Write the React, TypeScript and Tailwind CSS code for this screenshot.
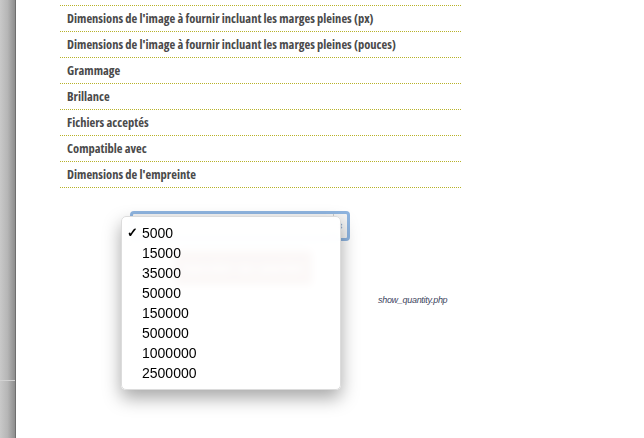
import React from "react";

const rows = [
  "Dimensions de l'image à fournir incluant les marges pleines (mm)",
  "Dimensions de l'image à fournir incluant les marges pleines (px)",
  "Dimensions de l'image à fournir incluant les marges pleines (pouces)",
  "Grammage",
  "Brillance",
  "Fichiers acceptés",
  "Compatible avec",
  "Dimensions de l'empreinte",
];

const quantities = ["5000", "15000", "35000", "50000", "150000", "500000", "1000000", "2500000"];

function SpecRow({ label }: { label: string }) {
  return (
    <div className="relative h-[26px] border-b border-dotted border-[#b8b22a] flex items-center pl-[7px] pt-[2px] overflow-hidden">
      <span className="font-['Open_Sans',sans-serif] font-stretch-condensed font-bold text-[12.5px] text-[#4a4a4a] whitespace-nowrap">
        {label}
      </span>
      <span className="absolute right-0 bottom-[-1px] w-[5px] h-px bg-[#b8b22a]" />
    </div>
  );
}

export default function App() {
  return (
    <div className="flex w-[644px] h-[438px] overflow-hidden bg-white">
      {/* bande grise à gauche */}
      <div className="relative w-[16px] shrink-0 bg-gradient-to-r from-[#c9c9c9] via-[#b6b6b6] to-[#8e8e8e] border-r border-[#6f6f6f]">
        <div className="absolute left-0 right-0 top-[380px] h-px bg-[#d2d2d2]" />
      </div>

      <div className="flex-1">
        {/* tableau des caractéristiques */}
        <div className="ml-[44px] w-[401px] mt-[-20px]">
          {rows.map((r) => (
            <SpecRow key={r} label={r} />
          ))}
        </div>

        {/* quantité + panier */}
        <div className="relative flex items-start mt-[23px]">
          <div className="ml-[114px] w-[220px]">
            <div className="h-[30px] rounded-[4px] border-[3px] border-[#8fb5e0] bg-[#f4f4f4] flex justify-end">
              <div className="w-[14px] border-l border-[#c9c9c9] flex items-center justify-center text-[8px] text-[#888] leading-none">
                ⇕
              </div>
            </div>
            <div className="mt-[10px] ml-[44px] w-[138px] h-[34px] rounded-[2px] bg-[#9a4a3c] flex items-center justify-center font-['Liberation_Sans',sans-serif] font-bold text-[15px] text-white">
              Ajouter au panier
            </div>
          </div>
          <div className="ml-[28px] mt-[83px] font-['Liberation_Sans',sans-serif] italic text-[9px] text-[#3d4560] tracking-[-0.3px]">
            show_quantity.php
          </div>

          {/* menu déroulant ouvert */}
          <div className="absolute left-[105px] top-[5px] w-[220px] rounded-[5px] bg-white/[0.96] backdrop-blur-[4px] py-[6px] shadow-[0_8px_18px_rgba(0,0,0,0.35)] border border-[#dcdcdc] font-['Liberation_Sans',sans-serif] text-[14px] text-black">
            {quantities.map((q, i) => (
              <div key={q} className="relative h-[20px] flex items-center pl-[20px]">
                {i === 0 && <span className="absolute left-[5px] text-[13px] font-bold">✓</span>}
                {q}
              </div>
            ))}
          </div>
        </div>
      </div>
    </div>
  );
}
